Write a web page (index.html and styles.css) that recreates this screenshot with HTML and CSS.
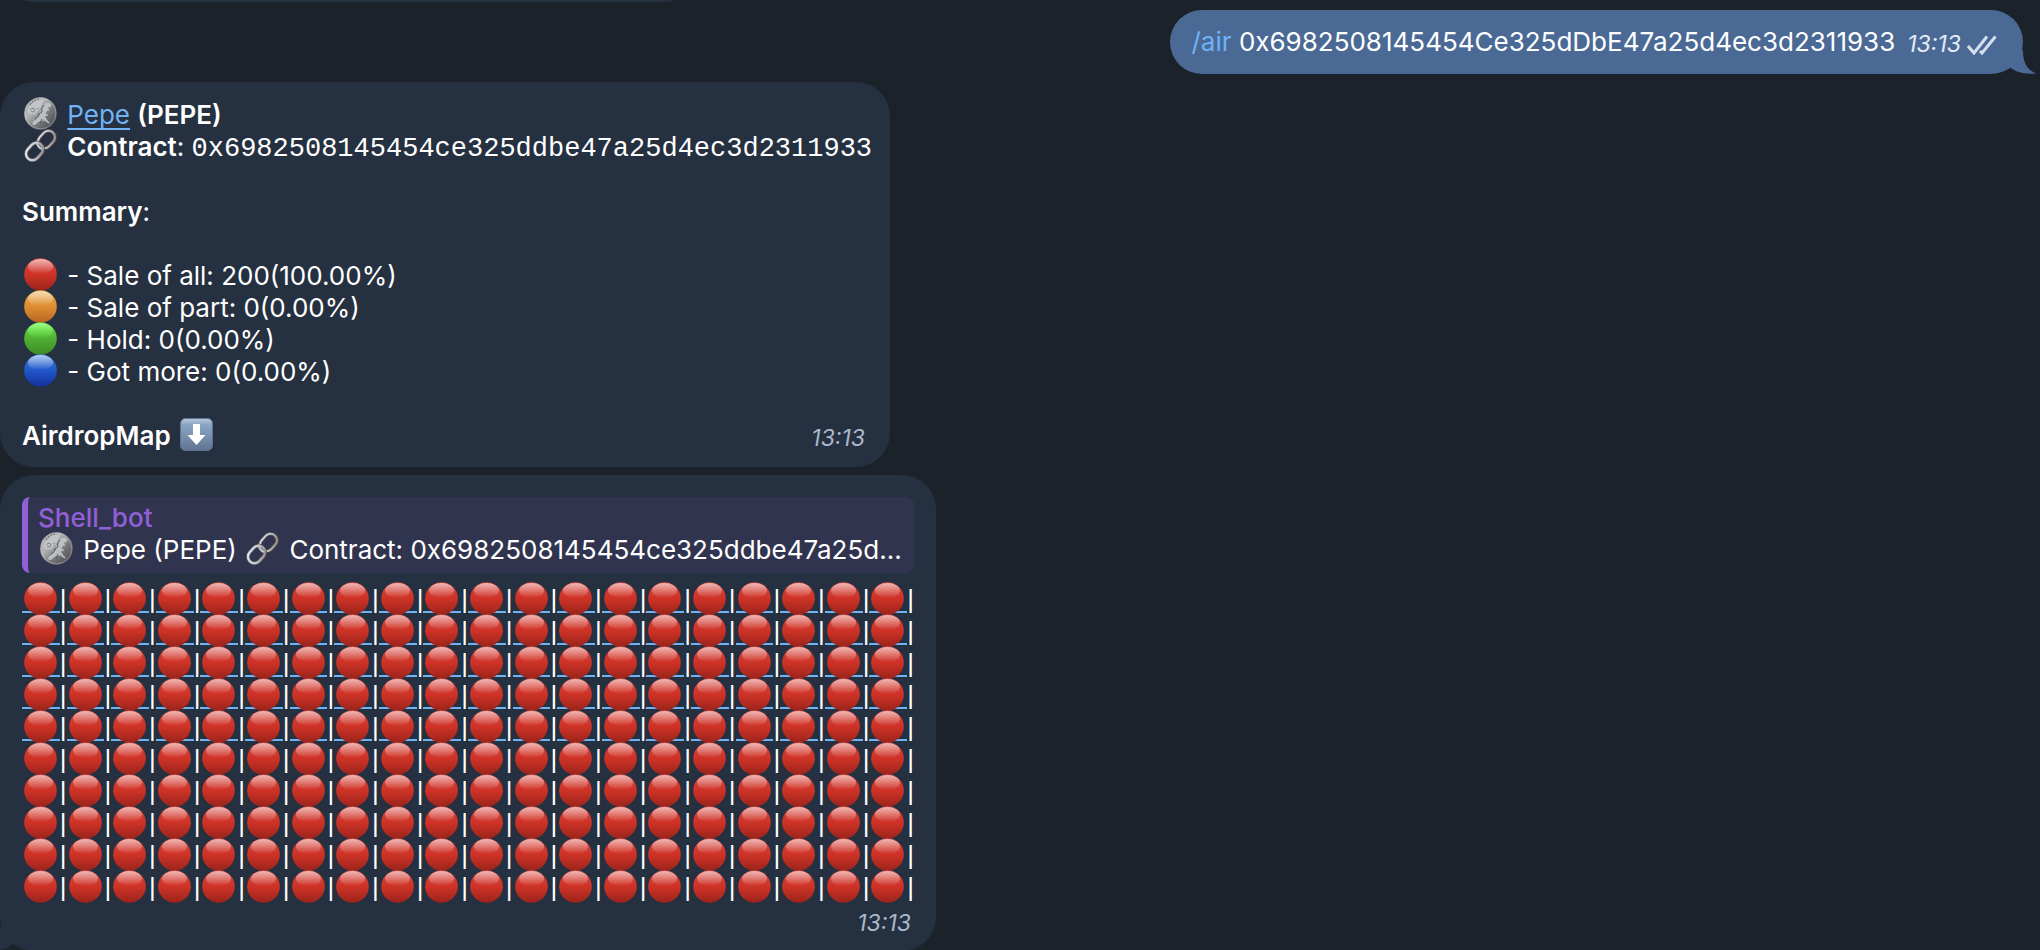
FILE: index.html
```html
<!DOCTYPE html>
<html lang="en">
<head>
    <meta charset="UTF-8">
    <meta name="viewport" content="width=device-width, initial-scale=1.0">
    <title>Shell_bot</title>
    <link rel="stylesheet" href="styles.css">
</head>
<body>
    <svg class="defs" aria-hidden="true">
        <defs>
            <linearGradient id="g-red" x1="0" y1="0" x2="0" y2="1">
                <stop offset="0" stop-color="#d8453c"/><stop offset=".5" stop-color="#cf3327"/><stop offset="1" stop-color="#9a231b"/>
            </linearGradient>
            <linearGradient id="g-orange" x1="0" y1="0" x2="0" y2="1">
                <stop offset="0" stop-color="#eba742"/><stop offset=".5" stop-color="#de8f32"/><stop offset="1" stop-color="#b96425"/>
            </linearGradient>
            <linearGradient id="g-green" x1="0" y1="0" x2="0" y2="1">
                <stop offset="0" stop-color="#62d944"/><stop offset=".5" stop-color="#50b033"/><stop offset="1" stop-color="#3d8a26"/>
            </linearGradient>
            <linearGradient id="g-blue" x1="0" y1="0" x2="0" y2="1">
                <stop offset="0" stop-color="#3f80dc"/><stop offset=".5" stop-color="#2257cb"/><stop offset="1" stop-color="#132f9c"/>
            </linearGradient>
            <linearGradient id="g-shine" x1="0" y1="0" x2="0" y2="1">
                <stop offset="0" stop-color="#fff" stop-opacity=".62"/><stop offset="1" stop-color="#fff" stop-opacity="0"/>
            </linearGradient>
            <linearGradient id="g-shine-green" x1="0" y1="0" x2="0" y2="1">
                <stop offset="0" stop-color="#a4ff8c"/><stop offset="1" stop-color="#6cf04c" stop-opacity="0"/>
            </linearGradient>
            <linearGradient id="g-coin" x1="0" y1="0" x2="1" y2="1">
                <stop offset="0" stop-color="#a2a5a6"/><stop offset=".35" stop-color="#b2b4b5"/><stop offset=".6" stop-color="#77797b"/><stop offset="1" stop-color="#3c3e41"/>
            </linearGradient>
            <linearGradient id="g-key" x1="0" y1="0" x2="0" y2="1">
                <stop offset="0" stop-color="#b8c8da"/><stop offset=".2" stop-color="#8aa5c4"/><stop offset="1" stop-color="#5f7591"/>
            </linearGradient>
            <linearGradient id="g-steel" x1="0" y1="0" x2="1" y2="1">
                <stop offset="0" stop-color="#dfe7f5"/><stop offset=".5" stop-color="#c3c7cf"/><stop offset="1" stop-color="#8c8685"/>
            </linearGradient>
            <symbol id="red" viewBox="0 0 33 33">
                <circle cx="16.5" cy="16.5" r="16.3" fill="url(#g-red)"/>
                <ellipse cx="16.5" cy="8.5" rx="12.5" ry="7.5" fill="url(#g-shine)"/>
            </symbol>
            <symbol id="orange" viewBox="0 0 33 33">
                <circle cx="16.5" cy="16.5" r="16.3" fill="url(#g-orange)"/>
                <ellipse cx="16.5" cy="8.5" rx="12.5" ry="7.5" fill="url(#g-shine)"/>
            </symbol>
            <symbol id="green" viewBox="0 0 33 33">
                <circle cx="16.5" cy="16.5" r="16.3" fill="url(#g-green)"/>
                <ellipse cx="16.5" cy="9" rx="12.5" ry="8" fill="url(#g-shine-green)"/>
            </symbol>
            <symbol id="blue" viewBox="0 0 33 33">
                <circle cx="16.5" cy="16.5" r="16.3" fill="url(#g-blue)"/>
                <ellipse cx="16.5" cy="8.5" rx="12.5" ry="7.5" fill="url(#g-shine)"/>
            </symbol>
            <symbol id="coin" viewBox="0 0 33 33">
                <circle cx="16.5" cy="16.5" r="16.3" fill="url(#g-coin)"/>
                <circle cx="16.5" cy="16.5" r="15.4" fill="none" stroke="#d0d2d3" stroke-width="1" opacity=".4"/>
                <path d="M12 3.500L20 2.500L16 12L11 18L3 16L4 10Z" fill="#e6e8e8" opacity=".35"/>
                <path d="M21 6.500l4-1 2.500 2-1 2.500-2.500.5 1 3-2 2.500 1 2.500-3 1 2.500 4 2.500 2.500-1.500.5-4-3-3 .5-3 1-3.500 3-3-.5 1-3 3-2 1-3 3-1.500-.5-3 2.500-3z" fill="#c6c9c9" opacity=".85"/>
                <path d="M20 8l-2.500 4 .5 3-3 2-1 3-3 2M24 14l-2 3M18 22l-2 4" fill="none" stroke="#595b5e" stroke-width="1"/>
                <path d="M6.500 12.500l2.500-1.500 2 1.500-1.500 2.500-2.500-.5M13 12l1.500-1" fill="none" stroke="#77797b" stroke-width="1"/>
                <path d="M6 7.500C8.500 4 12 2 16 2" fill="none" stroke="#76797b" stroke-width="1.500" stroke-dasharray="1.500 1.500"/>
            </symbol>
            <symbol id="chain" viewBox="0 0 33 33">
                <g fill="none">
                    <rect x="-9.500" y="-6.500" width="19" height="13" rx="6.500" transform="translate(22.500 10.500) rotate(-48)" stroke="#514a49" stroke-width="3.800"/>
                    <rect x="-9.500" y="-6.500" width="19" height="13" rx="6.500" transform="translate(22.500 10.500) rotate(-48)" stroke="url(#g-steel)" stroke-width="2"/>
                    <rect x="-9.500" y="-6.500" width="19" height="13" rx="6.500" transform="translate(10.500 22.500) rotate(-48)" stroke="#514a49" stroke-width="3.800"/>
                    <rect x="-9.500" y="-6.500" width="19" height="13" rx="6.500" transform="translate(10.500 22.500) rotate(-48)" stroke="url(#g-steel)" stroke-width="2.400"/>
                    <path d="M13 12.500C12.500 15.500 14.500 19 18 20" stroke="#c3c7ce" stroke-width="2"/>
                </g>
            </symbol>
            <symbol id="down" viewBox="0 0 33 33">
                <rect x=".5" y=".5" width="32" height="32" rx="5" fill="url(#g-key)" stroke="#5e738d"/>
                <path d="M13 6h7v11h5.500L16.500 27 7.500 17H13z" fill="#fff"/>
            </symbol>
            <symbol id="tail" viewBox="0 0 40 24">
                <path d="M27 0C27 12 30 19 40 23.500C28 24.500 20 22 14 17.500V0Z"/>
            </symbol>
        </defs>
    </svg>

    <main class="chat">
        <article class="msg msg-in msg-prev"></article>

        <article class="msg msg-out">
            <p><a href="#" class="command">/air</a> 0x6982508145454Ce325dDbE47a25d4ec3d2311933</p>
            <time class="time">13:13</time>
            <svg class="checks" viewBox="0 0 30 20" aria-label="Read"><path d="M1 11l6 7L20 1.500M13 16l2 2L28.500 1.500"/></svg>
            <svg class="tail"><use href="#tail"/></svg>
        </article>

        <article class="msg msg-in">
            <p><svg class="emoji"><use href="#coin"/></svg> <a href="#" class="link">Pepe</a> <b>(PEPE)</b></p>
            <p><svg class="emoji"><use href="#chain"/></svg> <b>Contract</b>: <code>0x6982508145454ce325ddbe47a25d4ec3d2311933</code></p>
            <br>
            <p><b>Summary</b>:</p>
            <br>
            <p><svg class="emoji"><use href="#red"/></svg> - Sale of all: 200(100.00%)</p>
            <p><svg class="emoji"><use href="#orange"/></svg> - Sale of part: 0(0.00%)</p>
            <p><svg class="emoji"><use href="#green"/></svg> - Hold: 0(0.00%)</p>
            <p><svg class="emoji"><use href="#blue"/></svg> - Got more: 0(0.00%)</p>
            <br>
            <div class="last-line">
                <p><b>AirdropMap</b> <svg class="emoji"><use href="#down"/></svg></p>
                <time class="time">13:13</time>
            </div>
        </article>

        <article class="msg msg-in msg-map">
            <blockquote class="reply">
                <p class="reply-name">Shell_bot</p>
                <p class="reply-text"><svg class="emoji"><use href="#coin"/></svg> Pepe (PEPE) <svg class="emoji"><use href="#chain"/></svg> Contract: 0x6982508145454ce325ddbe47a25d...</p>
            </blockquote>
            <div class="map" id="map"></div>
            <time class="time">13:13</time>
            <svg class="tail"><use href="#tail"/></svg>
        </article>
    </main>

    <script>
        var map = document.querySelector("#map");
        var total = 200, linked = 100;
        var cells = "";
        for (let i = 0; i < total; i++)
        {
            var dot = '<svg class="emoji"><use href="#red"/></svg>';
            // only the first wallets get a link, the message has an entity limit
            if (i < linked)
                dot = '<a href="#" class="wallet" aria-label="Wallet ' + (i + 1) + '">' + dot + '</a>';
            else
                dot = '<span class="wallet">' + dot + '</span>';
            cells += '<div class="cell">' + dot + '<span class="bar">|</span></div>';
        }
        map.innerHTML = cells;
    </script>
</body>
</html>
```
FILE: styles.css
```css
*
{
    box-sizing: border-box;
}
body
{
    margin: 0;
    background-color: #1b222a;
    color: white;
    font-family: Inter, "Liberation Sans", sans-serif;
    font-size: 26px;
    line-height: 32px;
}
p
{
    margin: 0;
}
b
{
    font-weight: 600;
}
a
{
    color: #6fb3f5;
}
code
{
    font-family: "Liberation Mono", monospace;
    font-size: 27px;
    line-height: 30px;
}
.defs
{
    position: absolute;
    width: 0;
    height: 0;
}
.chat
{
    display: flex;
    flex-direction: column;
    align-items: flex-start;
    gap: 8px;
    overflow: hidden;
}
.msg
{
    position: relative;
    border-radius: 34px;
}
.msg-in
{
    padding: 17px 18px 15px 22px;
    background-color: #253040;
}
/* end of the message above, scrolled out of view */
.msg-prev
{
    width: 698px;
    height: 70px;
    margin-top: -68px;
}
.msg-out
{
    display: flex;
    align-items: center;
    align-self: flex-end;
    margin-right: 17px;
    padding: 16px 26px 16px 22px;
    border-radius: 32px;
    background-color: #4a6a95;
}
.command
{
    text-decoration: none;
}
.link
{
    text-decoration-thickness: 2px;
    text-underline-offset: 4px;
    text-decoration-skip-ink: none;
}
.emoji
{
    width: 33px;
    height: 33px;
    margin: -4px 3px 0 2px;
    vertical-align: -6px;
}
.time
{
    color: #a9b8cb;
    font-size: 23px;
    font-style: italic;
    line-height: 28px;
}
.msg-out .time
{
    margin: 4px 6px 0 12px;
    color: #e3ebf5;
}
.checks
{
    width: 30px;
    height: 20px;
    margin-top: 6px;
    fill: none;
    stroke: #d3dfee;
    stroke-width: 3;
}
.tail
{
    position: absolute;
    right: -13px;
    bottom: 0;
    width: 40px;
    height: 24px;
    fill: #4a6a95;
}
.last-line
{
    display: flex;
    justify-content: space-between;
}
.last-line .time
{
    padding: 4px 7px 0 0;
}

/* airdrop map */
.msg-map
{
    display: flex;
    flex-direction: column;
    width: 936px;
    max-width: 100%;
    padding: 22px 22px 14px;
}
.msg-map .tail
{
    right: auto;
    left: -13px;
    transform: scaleX(-1);
    fill: #253040;
}
.msg-map .time
{
    align-self: flex-end;
    margin-top: 6px;
    padding-right: 3px;
}
.reply
{
    margin: 0 0 10px;
    padding: 5px 8px 7px 10px;
    border-left: 6px solid #9160d8;
    border-radius: 8px;
    background-color: #31344f;
}
.reply-name
{
    color: #9160d8;
    font-weight: 500;
}
.reply-text
{
    white-space: nowrap;
}
.map
{
    display: grid;
    grid-template-columns: repeat(20, minmax(0, 1fr));
}
.cell
{
    display: flex;
    height: 32px;
}
.wallet
{
    flex: 1;
    min-width: 0;
    height: 30px;
}
a.wallet
{
    border-bottom: 2px solid #6fb3f5;
}
.wallet .emoji
{
    display: block;
    margin: -1px 0 0 2px;
}
.bar
{
    font-family: "Liberation Sans", sans-serif;
}
```
